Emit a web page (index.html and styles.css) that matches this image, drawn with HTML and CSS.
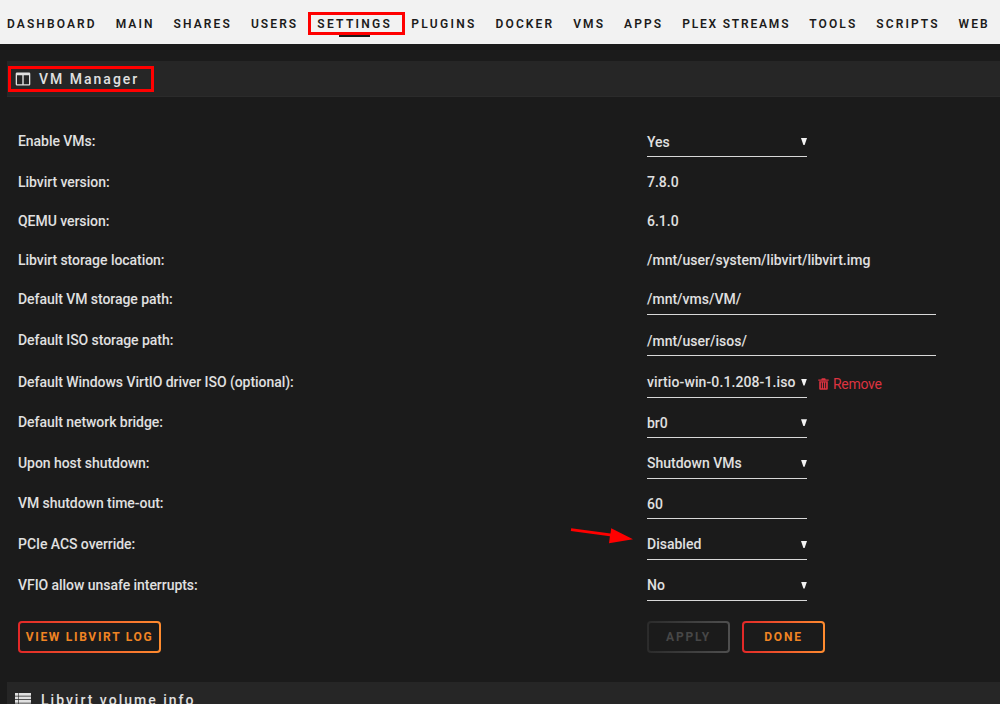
FILE: index.html
```
<!DOCTYPE html>
<html lang="en">
<head>
  <meta charset="UTF-8">
  <title>VM Manager</title>
  <meta name="viewport" content="width=device-width, initial-scale=1.0">
  <link rel="stylesheet" href="styles.css">
</head>
<body>
  <nav class="menu">
    <a>DASHBOARD</a>
    <a>MAIN</a>
    <a>SHARES</a>
    <a>USERS</a>
    <a class="active loose">SETTINGS<span class="mark mark-nav"></span></a>
    <a class="loose">PLUGINS</a>
    <a>DOCKER</a>
    <a>VMS</a>
    <a>APPS</a>
    <a class="tight">PLEX STREAMS</a>
    <a>TOOLS</a>
    <a>SCRIPTS</a>
    <a>WEB</a>
  </nav>

  <div class="title">
    <svg class="icon" width="16" height="14" viewBox="0 0 16 14">
      <path fill="currentColor" fill-rule="evenodd" d="M2 .5h12a1.3 1.3 0 0 1 1.3 1.3v10.4a1.3 1.3 0 0 1-1.3 1.3H2A1.3 1.3 0 0 1 .7 12.200V1.800A1.300 1.300 0 0 1 2 .5zM2 3.300v8.900h5.300V3.300zM8.700 3.300v8.900H14V3.300z"/>
    </svg>
    <span>VM Manager</span>
    <span class="mark mark-title"></span>
  </div>

  <div class="form">
    <div class="row"><label>Enable VMs:</label><div class="select">Yes<i class="caret"></i></div></div>
    <div class="row text"><label>Libvirt version:</label><span>7.8.0</span></div>
    <div class="row text"><label>QEMU version:</label><span>6.1.0</span></div>
    <div class="row text"><label>Libvirt storage location:</label><span>/mnt/user/system/libvirt/libvirt.img</span></div>
    <div class="row path"><label>Default VM storage path:</label><div class="input wide">/mnt/vms/VM/</div></div>
    <div class="row path"><label>Default ISO storage path:</label><div class="input wide">/mnt/user/isos/</div></div>
    <div class="row">
      <label>Default Windows VirtIO driver ISO (optional):</label>
      <div class="select iso">virtio-win-0.1.208-1.iso<i class="caret"></i></div>
      <a class="remove">
        <svg width="11" height="12" viewBox="0 0 11 12">
          <path fill="currentColor" fill-rule="evenodd" d="M3.300 1.500 3.800.3h3.400l.5 1.200h3v1.200H.3V1.500zM1.200 3.300h8.600v7.400a1 1 0 0 1-1 1H2.200a1 1 0 0 1-1-1zM2.900 4.500v5.700h.9V4.500zM5.050 4.500v5.700h.9V4.500zM7.200 4.500v5.700h.9V4.500z"/>
        </svg>
        <span>Remove</span>
      </a>
    </div>
    <div class="row"><label>Default network bridge:</label><div class="select">br0<i class="caret"></i></div></div>
    <div class="row"><label>Upon host shutdown:</label><div class="select">Shutdown VMs<i class="caret"></i></div></div>
    <div class="row"><label>VM shutdown time-out:</label><div class="input">60</div></div>
    <div class="row">
      <label>PCIe ACS override:</label>
      <div class="select">Disabled<i class="caret"></i></div>
      <svg class="arrow" width="64" height="20" viewBox="0 0 64 20">
        <path fill="#f00" d="M1.200 2.200 40.500 7.500 41.200 2.200 63 13.200 39 17.200 39.900 10.300.8 5z"/>
      </svg>
    </div>
    <div class="row"><label>VFIO allow unsafe interrupts:</label><div class="select">No<i class="caret"></i></div></div>
  </div>

  <div class="buttons">
    <div class="cell"><button class="log">VIEW LIBVIRT LOG</button></div>
    <button disabled>APPLY</button>
    <button>DONE</button>
  </div>

  <div class="title volume">
    <svg class="icon" width="16" height="14" viewBox="0 0 16 14">
      <path fill="currentColor" d="M0 0h3v2.800H0zM3.600 0H16v2.800H3.600zM0 3.500h3v2.800H0zM3.600 3.500H16v2.800H3.600zM0 7h3v2.800H0zM3.600 7H16v2.800H3.600zM0 10.500h3v2.800H0zM3.600 10.500H16v2.800H3.600z"/>
    </svg>
    <span>Libvirt volume info</span>
  </div>
</body>
</html>
```

FILE: styles.css
```
* { box-sizing: border-box; }

body {
  margin: 0;
  height: 704px;
  overflow: hidden;
  background: #1b1b1b;
  color: #e0e0e0;
  font-family: Roboto, sans-serif;
  font-size: 14px;
  font-weight: 500;
}

.menu {
  display: flex;
  gap: 19px;
  height: 44px;
  padding: 3px 0 0 7px;
  background: #f2f2f2;
  color: #1c1b1b;
  font-size: 12px;
  font-weight: 600;
  line-height: 42px;
  letter-spacing: 2.1px;
  white-space: nowrap;
}

.menu a { position: relative; }
.loose { letter-spacing: 2.3px; }
.tight { letter-spacing: 1.8px; }

.active::after {
  content: "";
  position: absolute;
  left: 22px;
  top: 32px;
  width: 31px;
  height: 2px;
  background: #1c1b1b;
}

.mark {
  position: absolute;
  border: 3px solid #f00;
}

.mark-nav {
  left: -9px;
  top: 9px;
  width: 97px;
  height: 23px;
}

.mark-title {
  left: 1px;
  top: 5px;
  width: 146px;
  height: 26px;
}

.title {
  position: relative;
  display: flex;
  align-items: center;
  height: 36px;
  margin: 17px 0 0 7px;
  padding-left: 8px;
  background: #262626;
  border-bottom: 1px solid #2b2b2b;
  font-size: 14px;
  letter-spacing: 2px;
}

.title .icon { margin-right: 8px; }

.form { padding: 25px 0 0 18px; }

.row {
  position: relative;
  display: flex;
  align-items: flex-start;
  height: 40.6px;
  line-height: 38px;
  white-space: nowrap;
}

.row.text { height: 39px; }
.row.path { height: 41.5px; }

label {
  width: 629px;
  letter-spacing: -0.05px;
}

.select, .input {
  display: flex;
  justify-content: space-between;
  align-items: center;
  width: 160px;
  height: 35px;
  padding-top: 5px;
  border-bottom: 1px solid #d8d8d8;
}

.input.wide { width: 289px; }
.iso { letter-spacing: 0.1px; }

.caret {
  width: 6px;
  height: 7px;
  background: #f2f2f2;
  clip-path: polygon(0 0, 100% 0, 60% 100%, 40% 100%);
}

.remove {
  display: flex;
  align-items: center;
  gap: 4px;
  height: 43px;
  margin-left: 11px;
  color: #dc3340;
  font-weight: 400;
  letter-spacing: -0.3px;
}

.arrow {
  position: absolute;
  left: 552px;
  top: 1px;
}

.buttons {
  display: flex;
  gap: 12px;
  padding: 15px 0 0 18px;
}

.cell { width: 617px; }

button {
  width: 83px;
  height: 32px;
  padding: 0;
  border: 2px solid transparent;
  border-radius: 4px;
  background: linear-gradient(#1b1b1b, #1b1b1b) padding-box, linear-gradient(90deg, #e22828, #ff8c2f) border-box;
  color: #f08423;
  font: 700 12px Roboto, sans-serif;
  letter-spacing: 1.8px;
}

button:disabled {
  background: linear-gradient(#1b1b1b, #1b1b1b) padding-box, linear-gradient(90deg, #2b2b2b, #4f4f4f) border-box;
  color: #474747;
}

.log {
  width: 143px;
  letter-spacing: 1.7px;
}

.volume { margin-top: 29px; }
.volume .icon { margin-right: 10px; }
```
